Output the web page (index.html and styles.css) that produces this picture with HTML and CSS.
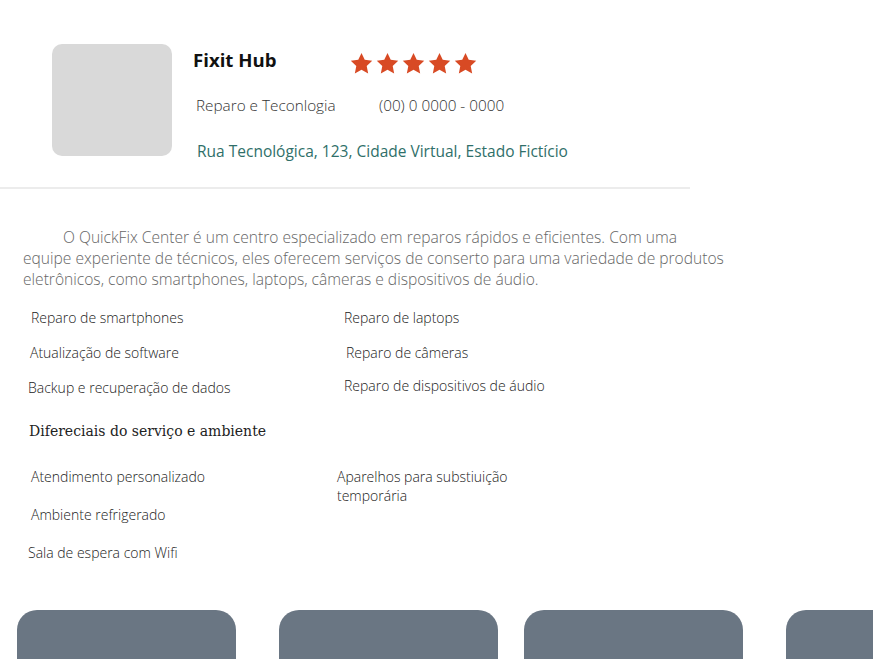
FILE: index.html
```html
<!DOCTYPE html>
<html lang="pt-BR">
<head>
<meta charset="utf-8">
<title>Fixit Hub</title>
<link rel="stylesheet" href="styles.css">
</head>
<body>
<header class="shop">
  <div class="shop-photo"></div>
  <div class="shop-info">
    <div class="shop-top">
      <h1 class="shop-name">Fixit Hub</h1>
      <div class="stars">
        <svg class="star" viewBox="0 0 24 24"><path d="M12 1.8l3.1 6.6 7.2.9-5.3 5 1.4 7.2L12 18l-6.4 3.5 1.4-7.2-5.3-5 7.2-.9z"/></svg>
        <svg class="star" viewBox="0 0 24 24"><path d="M12 1.8l3.1 6.6 7.2.9-5.3 5 1.4 7.2L12 18l-6.4 3.5 1.4-7.2-5.3-5 7.2-.9z"/></svg>
        <svg class="star" viewBox="0 0 24 24"><path d="M12 1.8l3.1 6.6 7.2.9-5.3 5 1.4 7.2L12 18l-6.4 3.5 1.4-7.2-5.3-5 7.2-.9z"/></svg>
        <svg class="star" viewBox="0 0 24 24"><path d="M12 1.8l3.1 6.6 7.2.9-5.3 5 1.4 7.2L12 18l-6.4 3.5 1.4-7.2-5.3-5 7.2-.9z"/></svg>
        <svg class="star" viewBox="0 0 24 24"><path d="M12 1.8l3.1 6.6 7.2.9-5.3 5 1.4 7.2L12 18l-6.4 3.5 1.4-7.2-5.3-5 7.2-.9z"/></svg>
      </div>
    </div>
    <div class="shop-mid">
      <span class="shop-cat">Reparo e Teconlogia</span>
      <span class="shop-phone">(00) 0 0000 - 0000</span>
    </div>
    <div class="shop-addr">Rua Tecnológica, 123, Cidade Virtual, Estado Fictício</div>
  </div>
</header>
<hr class="divider">
<main class="content">
  <p class="about">O QuickFix Center é um centro especializado em reparos rápidos e eficientes. Com uma equipe experiente de técnicos, eles oferecem serviços de conserto para uma variedade de produtos eletrônicos, como smartphones, laptops, câmeras e dispositivos de áudio.</p>
  <div class="services">
    <div class="svc-col">
      <span class="svc s1">Reparo de smartphones</span>
      <span class="svc s2">Atualização de software</span>
      <span class="svc s3">Backup e recuperação de dados</span>
    </div>
    <div class="svc-col right">
      <span class="svc s4">Reparo de laptops</span>
      <span class="svc s5">Reparo de câmeras</span>
      <span class="svc s6">Reparo de dispositivos de áudio</span>
    </div>
  </div>
  <h2 class="diff-title">Difereciais do serviço e ambiente</h2>
  <div class="diffs">
    <div class="diff-col">
      <span class="diff d1">Atendimento personalizado</span>
      <span class="diff d2">Ambiente refrigerado</span>
      <span class="diff d3">Sala de espera com Wifi</span>
    </div>
    <div class="diff-col right">
      <span class="diff d4">Aparelhos para substiuição temporária</span>
    </div>
  </div>
</main>
<section class="cards">
  <div class="card"></div>
  <div class="card"></div>
  <div class="card"></div>
  <div class="card"></div>
</section>
</body>
</html>
```
FILE: styles.css
```css
* { box-sizing: border-box; }
html, body { margin: 0; padding: 0; background: #fff; overflow: hidden; }
body {
  width: 873px;
  height: 659px;
  font-family: "Open Sans", "Noto Sans", sans-serif;
  color: #222;
}
.shop {
  display: flex;
  padding: 44px 0 0 52px;
  height: 187px;
}
.shop-photo {
  width: 120px;
  height: 112px;
  background: #d9d9d9;
  border-radius: 10px;
  flex: none;
}
.shop-info {
  margin-left: 21px;
  display: flex;
  flex-direction: column;
}
.shop-top {
  display: flex;
  align-items: center;
  height: 34px;
}
.shop-name {
  margin: 0;
  width: 156px;
  font-size: 18.6px;
  font-weight: 700;
  color: #111;
  line-height: 34px;
  position: relative;
  top: -1px;
}
.stars { display: flex; gap: 1px; position: relative; top: 2px; }
.star { width: 25px; height: 25px; fill: #d84a24; display: block; }
.shop-mid {
  display: flex;
  margin-top: 17px;
  padding-left: 3px;
  font-size: 15.3px;
  color: #333;
  font-weight: 300;
  line-height: 21px;
}
.shop-cat { width: 183px; }
.shop-addr {
  margin-top: 25px;
  padding-left: 4px;
  font-size: 15.5px;
  color: #2f6f69;
  line-height: 21px;
}
.divider {
  margin: 0;
  border: 0;
  height: 2px;
  width: 690px;
  background: #ececec;
}
.content { padding: 0 0 0 23px; }
.about {
  margin: 38px 0 0;
  width: 705px;
  font-size: 15.6px;
  line-height: 21px;
  color: #666;
  font-weight: 300;
  text-indent: 40px;
}
.services {
  display: flex;
  margin-top: 18px;
  font-size: 14px;
  font-weight: 300;
  color: #222;
}
.svc-col { display: flex; flex-direction: column; width: 313px; }
.svc { line-height: 19px; height: 35px; display: block; }
.s1 { padding-left: 8px; }
.s2 { padding-left: 7px; }
.s3 { padding-left: 5px; }
.s4 { padding-left: 8px; }
.s5 { padding-left: 10px; }
.s6 { padding-left: 8px; margin-top: -2px; }
.diff-title {
  margin: 8px 0 0 6px;
  font-family: "DejaVu Serif", "Liberation Serif", serif;
  font-weight: 400;
  font-size: 14px;
  color: #222;
  line-height: 20px;
}
.diffs {
  display: flex;
  margin-top: 26px;
  font-size: 14px;
  font-weight: 300;
  color: #222;
}
.diff-col { display: flex; flex-direction: column; width: 306px; }
.diff { display: block; line-height: 19px; }
.d1 { padding-left: 8px; height: 38px; }
.d2 { padding-left: 8px; height: 38px; }
.d3 { padding-left: 5px; }
.d4 { width: 190px; padding-left: 8px; }
.cards {
  display: flex;
  margin-top: 48px;
  padding-left: 17px;
  width: 873px;
  overflow: hidden;
}
.card {
  flex: none;
  width: 219px;
  height: 60px;
  background: #6a7683;
  border-radius: 20px 20px 0 0;
}
.card:nth-child(2) { margin-left: 43px; }
.card:nth-child(3) { margin-left: 26px; }
.card:nth-child(4) { margin-left: 43px; }
```
